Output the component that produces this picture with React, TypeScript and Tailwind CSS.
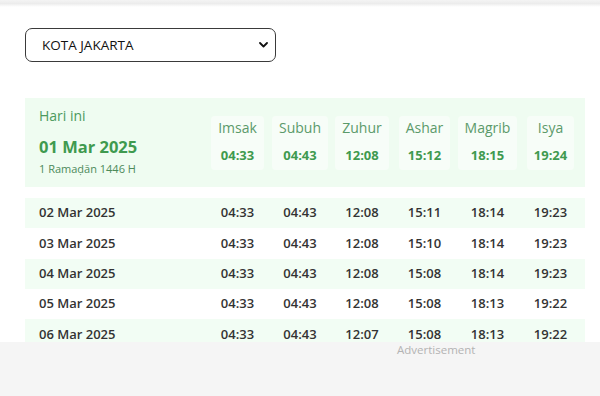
import React from "react";

const prayers = ["Imsak", "Subuh", "Zuhur", "Ashar", "Magrib", "Isya"];
const today = ["04:33", "04:43", "12:08", "15:12", "18:15", "19:24"];

const rows = [
  { date: "02 Mar 2025", times: ["04:33", "04:43", "12:08", "15:11", "18:14", "19:23"] },
  { date: "03 Mar 2025", times: ["04:33", "04:43", "12:08", "15:10", "18:14", "19:23"] },
  { date: "04 Mar 2025", times: ["04:33", "04:43", "12:08", "15:08", "18:14", "19:23"] },
  { date: "05 Mar 2025", times: ["04:33", "04:43", "12:08", "15:08", "18:13", "19:22"] },
  { date: "06 Mar 2025", times: ["04:33", "04:43", "12:07", "15:08", "18:13", "19:22"] },
];

const cols = "grid grid-cols-[181px_63px_62px_62px_63px_63px_63px]";

export default function App() {
  return (
    <div className="relative h-[396px] w-[600px] overflow-hidden bg-white font-['Open_Sans',sans-serif]">
      {/* top shadow strip */}
      <div className="h-[7px] bg-gradient-to-b from-[#f4f4f4] via-[#ececec] to-white" />

      <div className="px-[25px]">
        {/* kota select */}
        <div className="mt-[21px] flex h-[34px] w-[251px] items-center justify-between rounded-[7px] border border-[#3a3a3a] pl-[16px] pr-[7px]">
          <span className="text-[13.5px] text-[#111]">KOTA JAKARTA</span>
          <svg width="9" height="6" viewBox="0 0 9 6" fill="none">
            <path d="M1 1l3.5 3.5L8 1" stroke="#111" strokeWidth="1.8" strokeLinecap="round" strokeLinejoin="round" />
          </svg>
        </div>

        {/* hari ini */}
        <div className={`${cols} mt-[36px] h-[89px] w-[560px] items-center bg-[#effcf1]`}>
          <div className="flex flex-col pl-[14px] pb-[2px]">
            <span className="text-[14px] leading-[16px] text-[#4c9a5e]">Hari ini</span>
            <span className="mt-[13px] text-[16.5px] font-bold leading-[20px] text-[#3f9a4f]">01 Mar 2025</span>
            <span className="mt-[5px] text-[11px] leading-[14px] text-[#4c8a5a]">1 Ramaḍān 1446 H</span>
          </div>
          {prayers.map((p, i) => (
            <div key={p} className="flex justify-center">
              <div className="flex h-[54px] flex-col items-center justify-center rounded-[4px] bg-[#f7fdf8] px-[7px] pb-[2px]">
                <span className="text-[14px] leading-[16px] text-[#5b9a6a]">{p}</span>
                <span className="mt-[11px] text-[13px] font-bold leading-[16px] text-[#3f9a4f]">{today[i]}</span>
              </div>
            </div>
          ))}
        </div>

        {/* jadwal */}
        <div className="mt-[11px] w-[560px]">
          {rows.map((r, idx) => (
            <div key={r.date} className={`${cols} h-[30.3px] items-center ${idx % 2 === 0 ? "bg-[#f2fdf4]" : "bg-white"}`}>
              <span className="pl-[14px] text-[13px] font-semibold text-[#333]">{r.date}</span>
              {r.times.map((t, i) => (
                <span key={i} className="text-center text-[13px] font-semibold text-[#333]">{t}</span>
              ))}
            </div>
          ))}
        </div>
      </div>

      {/* iklan */}
      <div className="absolute bottom-0 left-0 h-[54px] w-full bg-[#f5f5f5]">
        <p className="ml-[397px] text-[11.5px] leading-[16px] text-[#b3b3b3]">Advertisement</p>
      </div>
    </div>
  );
}
